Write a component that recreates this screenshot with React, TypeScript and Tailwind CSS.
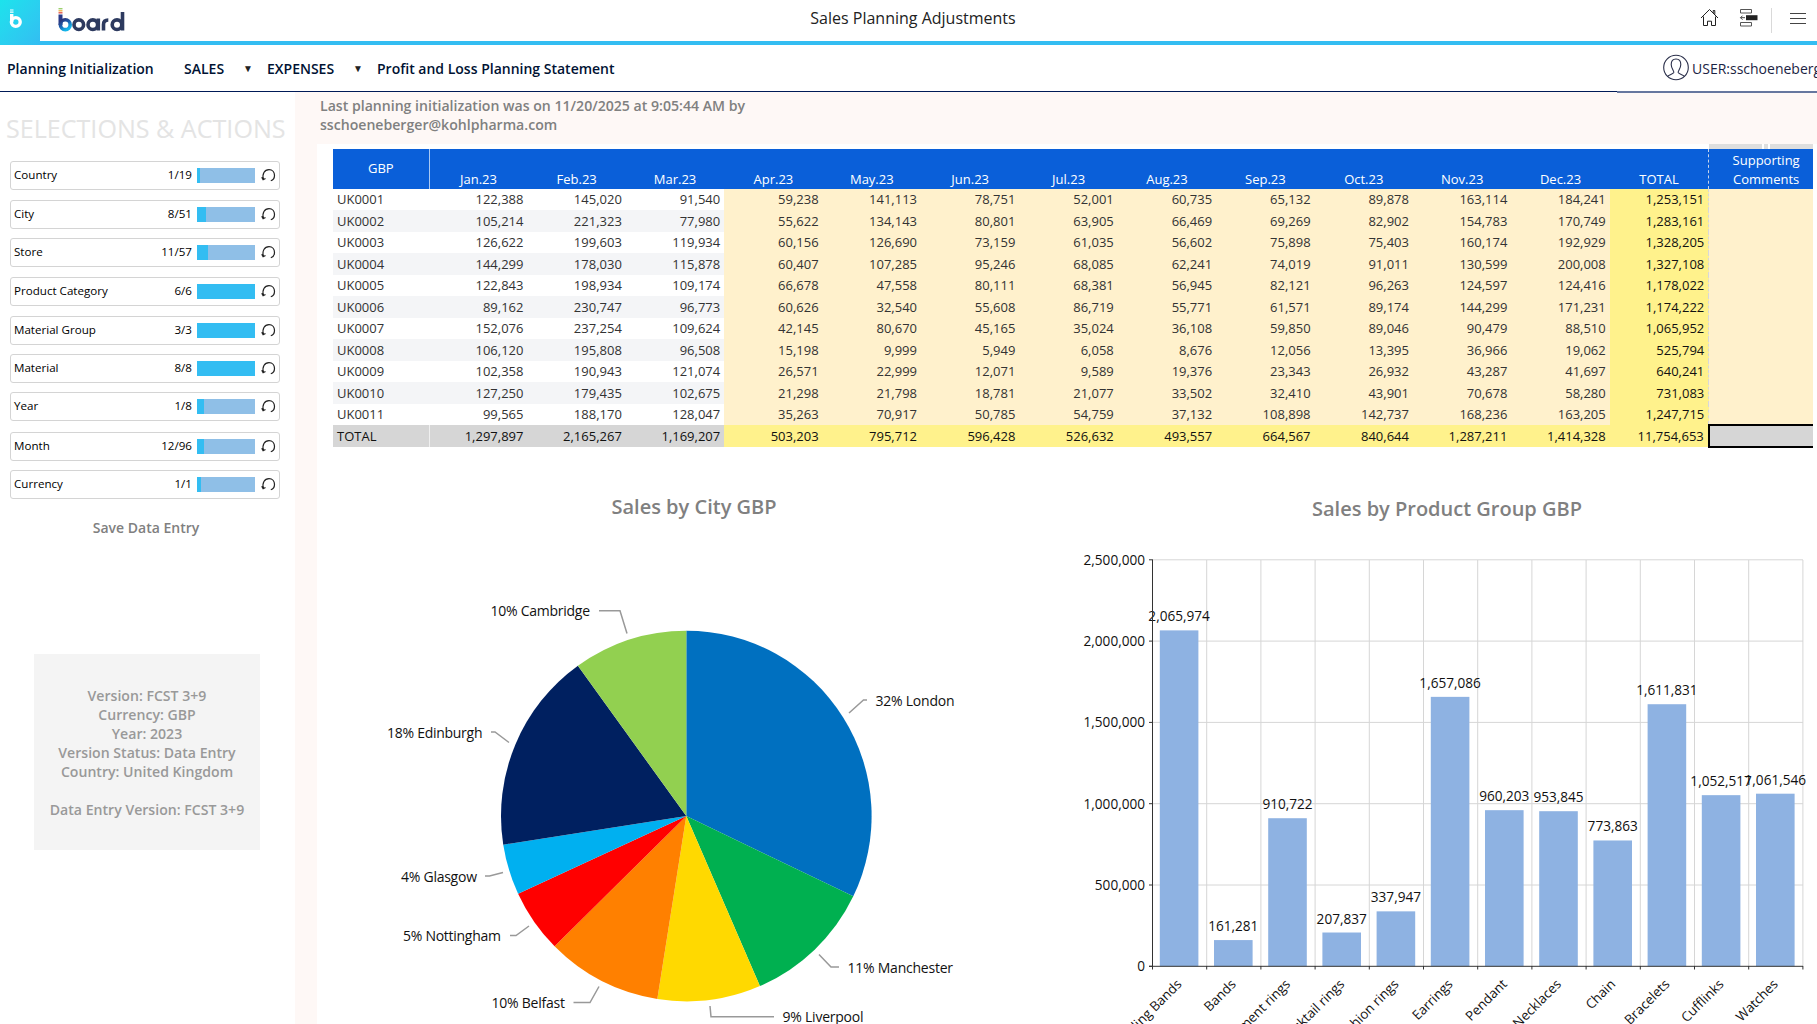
import React from "react";

const PERIODS = ["Jan.23", "Feb.23", "Mar.23", "Apr.23", "May.23", "Jun.23", "Jul.23", "Aug.23", "Sep.23", "Oct.23", "Nov.23", "Dec.23"];

const ROWS: [string, number[]][] = [
  ["UK0001", [122388, 145020, 91540, 59238, 141113, 78751, 52001, 60735, 65132, 89878, 163114, 184241, 1253151]],
  ["UK0002", [105214, 221323, 77980, 55622, 134143, 80801, 63905, 66469, 69269, 82902, 154783, 170749, 1283161]],
  ["UK0003", [126622, 199603, 119934, 60156, 126690, 73159, 61035, 56602, 75898, 75403, 160174, 192929, 1328205]],
  ["UK0004", [144299, 178030, 115878, 60407, 107285, 95246, 68085, 62241, 74019, 91011, 130599, 200008, 1327108]],
  ["UK0005", [122843, 198934, 109174, 66678, 47558, 80111, 68381, 56945, 82121, 96263, 124597, 124416, 1178022]],
  ["UK0006", [89162, 230747, 96773, 60626, 32540, 55608, 86719, 55771, 61571, 89174, 144299, 171231, 1174222]],
  ["UK0007", [152076, 237254, 109624, 42145, 80670, 45165, 35024, 36108, 59850, 89046, 90479, 88510, 1065952]],
  ["UK0008", [106120, 195808, 96508, 15198, 9999, 5949, 6058, 8676, 12056, 13395, 36966, 19062, 525794]],
  ["UK0009", [102358, 190943, 121074, 26571, 22999, 12071, 9589, 19376, 23343, 26932, 43287, 41697, 640241]],
  ["UK0010", [127250, 179435, 102675, 21298, 21798, 18781, 21077, 33502, 32410, 43901, 70678, 58280, 731083]],
  ["UK0011", [99565, 188170, 128047, 35263, 70917, 50785, 54759, 37132, 108898, 142737, 168236, 163205, 1247715]],
];

const TOTALS = [1297897, 2165267, 1169207, 503203, 795712, 596428, 526632, 493557, 664567, 840644, 1287211, 1414328, 11754653];

const SELECTORS = [
  { label: "Country", count: "1/19", fill: 5, gap: "mb-[10px]" },
  { label: "City", count: "8/51", fill: 15.5, gap: "mb-[9px]" },
  { label: "Store", count: "11/57", fill: 19, gap: "mb-[10px]" },
  { label: "Product Category", count: "6/6", fill: 100, gap: "mb-[10px]" },
  { label: "Material Group", count: "3/3", fill: 100, gap: "mb-[9px]" },
  { label: "Material", count: "8/8", fill: 100, gap: "mb-[9px]" },
  { label: "Year", count: "1/8", fill: 12, gap: "mb-[11px]" },
  { label: "Month", count: "12/96", fill: 12, gap: "mb-[9px]" },
  { label: "Currency", count: "1/1", fill: 7, gap: "" },
];

const SUMMARY = ["Version: FCST 3+9", "Currency: GBP", "Year: 2023", "Version Status: Data Entry", "Country: United Kingdom", "\u00a0", "Data Entry Version: FCST 3+9"];

// start/end are degrees clockwise from 12 o'clock
const SLICES = [
  { label: "32% London", color: "#0070c0", start: 0, end: 115.7, line: "849,713 863.5,700 867,700", x: 875.5, y: 706, w: 79 },
  { label: "11% Manchester", color: "#00b050", start: 115.7, end: 156.6, line: "819,954.5 831,967 839,967", x: 847.5, y: 973, w: 105.5 },
  { label: "9% Liverpool", color: "#ffd900", start: 156.6, end: 189, line: "710,1006 711,1016.7 774,1016.7", x: 782.5, y: 1022, w: 81 },
  { label: "10% Belfast", color: "#ff8000", start: 189, end: 225.3, line: "599,986.5 590,1002.5 573.5,1002.5", x: 491.5, y: 1008, w: 73.5 },
  { label: "5% Nottingham", color: "#ff0000", start: 225.3, end: 245.2, line: "529,926 516,935.5 510,935.5", x: 403, y: 941, w: 98 },
  { label: "4% Glasgow", color: "#00b0f0", start: 245.2, end: 261.1, line: "503,872.5 489.5,876 485,876", x: 401, y: 882, w: 76 },
  { label: "18% Edinburgh", color: "#002060", start: 261.1, end: 324.2, line: "509,742.5 495,732 491,732", x: 387, y: 738, w: 95.5 },
  { label: "10% Cambridge", color: "#92d050", start: 324.2, end: 360, line: "627,633.5 620,610.7 599,610.7", x: 490.5, y: 616, w: 99.5 },
];

const BARS: [string, number][] = [
  ["Wedding Bands", 2065974],
  ["Bands", 161281],
  ["Engagement rings", 910722],
  ["Cocktail rings", 207837],
  ["Fashion rings", 337947],
  ["Earrings", 1657086],
  ["Pendant", 960203],
  ["Necklaces", 953845],
  ["Chain", 773863],
  ["Bracelets", 1611831],
  ["Cufflinks", 1052517],
  ["Watches", 1061546],
];

const fmt = (n: number) => n.toLocaleString("en-US");

const BoardLogo: React.FC = () => (
  <svg width="70" height="26" viewBox="0 0 70 26" fill="none" className="ml-[17px] mt-[7px]">
    <defs>
      <linearGradient id="board-b" x1="0" y1="0" x2="0.6" y2="1">
        <stop offset="0" stopColor="#2b2f74" />
        <stop offset="0.5" stopColor="#1d5fae" />
        <stop offset="1" stopColor="#12b5ea" />
      </linearGradient>
    </defs>
    <path d="M1.5 1.7h4" stroke="#9ccf6c" strokeWidth="1.4" />
    <path d="M1.5 3.8h4" stroke="#f3b04b" strokeWidth="1.4" />
    <path d="M1.5 5.8h4" stroke="#e2574c" strokeWidth="1.4" />
    <path d="M3.5 7.5V18" stroke="#2a3a88" strokeWidth="4" />
    <circle cx="8.3" cy="17.7" r="4.9" stroke="url(#board-b)" strokeWidth="3.6" />
    <g stroke="#2d3a5f" strokeWidth="3.6">
      <circle cx="21.8" cy="17.7" r="4.8" />
      <circle cx="35.8" cy="17.7" r="4.8" />
      <path d="M41.3 11.5V23.5M46.5 23.5v-6c0-3.3 1.5-4.5 4.8-4.5" />
      <circle cx="60" cy="17.7" r="4.8" />
      <path d="M65.5 5v18.5" />
    </g>
  </svg>
);

const TopBar: React.FC = () => (
  <header className="flex h-[45px] border-b-4 border-[#33bdf2] bg-white">
    <div className="h-[45px] w-10 shrink-0 bg-gradient-to-br from-[#1ce3ec] to-[#33bdf2]">
      <svg width="40" height="41" viewBox="0 0 40 41" fill="none" stroke="#fff">
        <path d="M10 10h3.5M10 12.2h3.5" strokeWidth="1.2" />
        <path d="M11.7 14v8" strokeWidth="3.4" />
        <circle cx="15.8" cy="22" r="4.4" strokeWidth="3.4" />
      </svg>
    </div>
    <BoardLogo />
    <h1 className="ml-[466px] mt-[7px] w-[640px] text-center text-base leading-[22px] text-[#222]">Sales Planning Adjustments</h1>
    <div className="ml-auto flex h-[41px] shrink-0 items-start">
      <svg width="20" height="20" viewBox="0 0 20 20" fill="none" stroke="#222" className="mt-2">
        <path d="M1 10 9.5 1.5 18 10M3.500 8.500v9h4v-4.300h4v4.300h4v-9M13.200 5V2.500h1.600v4.200" />
      </svg>
      <svg width="20" height="20" viewBox="0 0 20 20" fill="none" className="ml-[19px] mt-2">
        <path d="M1.5 1.500h11v3.500h-11zM1.500 14.500h11V18h-11z" stroke="#555" />
        <path d="M7 7.200h11.500v5H7z" fill="#222" />
        <path d="M6 9.700H1.500M3.500 7.700l-2 2 2 2" stroke="#444" />
      </svg>
      <div className="ml-[12px] mt-2 h-[25px] w-px bg-[#d9d9d9]" />
      <svg width="16" height="14" viewBox="0 0 16 14" stroke="#444" className="ml-[18px] mr-[11px] mt-3">
        <path d="M0 1.500h16M0 6.500h16M0 11.500h16" />
      </svg>
    </div>
  </header>
);

const NavBar: React.FC = () => (
  <nav className="flex h-[47px] items-center overflow-hidden border-b border-[#001a57] bg-white pt-px text-[14px] font-semibold text-[#001233]">
    <span className="ml-[7px] w-[177px] shrink-0 whitespace-nowrap">Planning Initialization</span>
    <span className="w-[59px] shrink-0">SALES</span>
    <span className="w-6 shrink-0 text-[10px] text-[#222]">▼</span>
    <span className="w-[86px] shrink-0">EXPENSES</span>
    <span className="w-6 shrink-0 text-[10px] text-[#222]">▼</span>
    <span className="shrink-0 whitespace-nowrap">Profit and Loss Planning Statement</span>
    <div className="ml-auto flex w-[154px] shrink-0 items-center font-normal text-[#1b2444]">
      <svg width="26" height="27" viewBox="0 0 26 27" fill="none" stroke="#2a2f4a" strokeWidth="1.1" className="mb-[3px] shrink-0">
        <circle cx="13" cy="13.5" r="12.3" />
        <path d="M4.5 22.5c1-2 5.5-2.2 6.300-4 .4-1.500-2.600-4-2.600-8 0-3.500 2-5.500 4.800-5.500s4.800 2 4.800 5.500c0 4-3 6.500-2.600 8 .8 1.800 5.300 2 6.300 4" />
      </svg>
      <span className="ml-[3px] whitespace-nowrap">USER:sschoeneberger</span>
    </div>
  </nav>
);

const Sidebar: React.FC = () => (
  <aside className="w-[295px] shrink-0 bg-white">
    <h2 className="mt-[19px] ml-[6px] whitespace-nowrap text-[25.1px] leading-[34px] text-[#e4e4e4]">SELECTIONS &amp; ACTIONS</h2>
    <div className="mt-[16px] ml-[10px] flex w-[270px] flex-col">
      {SELECTORS.map((s) => (
        <div key={s.label} className={`flex h-[29px] items-center rounded-[3px] border border-[#d4d4d4] text-[11.6px] text-black ${s.gap}`}>
          <span className="ml-[3px] flex-1 pb-px">{s.label}</span>
          <span className="mr-[5px] pb-px">{s.count}</span>
          <div className="h-[15px] w-[58px] bg-[#8fbfe7]">
            <div className="h-full bg-[#33bdf2]" style={{ width: `${s.fill}%` }} />
          </div>
          <svg width="15" height="15" viewBox="0 0 15 15" fill="none" stroke="#222" strokeWidth="1.2" className="ml-[6px] mr-[3px]">
            <path d="M2.5 11.5C.8 6 3.500 1.700 8 1.700c3.500 0 5.500 2.800 5.500 5.800 0 2.500-1.500 4.500-3.700 5.300M.7 9.300l1.400 2.500 2.400-1.300" />
          </svg>
        </div>
      ))}
    </div>
    <button className="mt-[19px] ml-[46px] block w-[200px] text-center text-[14px] font-semibold leading-5 text-[#808080]">Save Data Entry</button>
    <div className="mt-[116px] ml-[34px] flex h-[196px] w-[226px] flex-col items-center bg-[#f4f4f4] pt-[32px] text-[14.1px] font-semibold leading-[19px] text-[#999]">
      {SUMMARY.map((line, i) => (
        <span key={i}>{line}</span>
      ))}
    </div>
  </aside>
);

const PlanningTable: React.FC = () => (
  <table className="ml-4 w-[1480px] table-fixed border-collapse text-[13px] text-[#333]">
    <colgroup>
      <col className="w-[96px]" />
      {PERIODS.map((p) => (
        <col key={p} className="w-[98.35px]" />
      ))}
      <col className="w-[99px]" />
      <col className="w-[104px]" />
    </colgroup>
    <thead>
      <tr className="h-[39.5px] bg-[#0a5fd9] leading-[19px] text-white">
        <th className="border-r border-[#a9c8f3] font-normal">GBP</th>
        {PERIODS.map((p) => (
          <th key={p} className="align-bottom font-normal">{p}</th>
        ))}
        <th className="align-bottom font-normal">TOTAL</th>
        <th className="border-l border-dashed border-[#c7d5ea] pl-[10px] align-bottom font-normal">Supporting Comments</th>
      </tr>
    </thead>
    <tbody>
      {ROWS.map(([store, values], r) => (
        <tr key={store} className={`h-[21.5px] leading-[18px] ${r % 2 ? "bg-[#f4f5f7]" : "bg-white"}`}>
          <td className="pl-1">{store}</td>
          {values.map((v, c) => (
            <td key={c} className={`pr-[4px] text-right ${c === 12 ? "bg-[#fff28c] text-[#111]" : c > 2 ? "bg-[#fff1cc]" : ""}`}>
              {fmt(v)}
            </td>
          ))}
          <td className="border-l border-dashed border-[#d8d8d8] bg-[#fff1cc]" />
        </tr>
      ))}
      <tr className="h-[22px] bg-[#d6d6d6] leading-[18px] text-[#111]">
        <td className="border-r border-[#f0f0f0] pl-1">TOTAL</td>
        {TOTALS.map((v, c) => (
          <td key={c} className={`pr-[4px] text-right ${c > 2 ? "bg-[#fff28c]" : ""}`}>{fmt(v)}</td>
        ))}
        <td className="border-y-2 border-l-2 border-black" />
      </tr>
    </tbody>
  </table>
);

const slicePath = (start: number, end: number) => {
  const point = (deg: number) => {
    const a = (deg * Math.PI) / 180;
    return `${686.3 + 185.3 * Math.sin(a)} ${816 - 185.3 * Math.cos(a)}`;
  };
  return `M686.3 816L${point(start)}A185.3 185.3 0 0 1 ${point(end)}Z`;
};

const CityPie: React.FC = () => (
  <svg width="700" height="464" viewBox="350 560 700 464" className="block" fontSize="14" fill="#111">
    {SLICES.map((s) => (
      <g key={s.label}>
        <path d={slicePath(s.start, s.end)} fill={s.color} />
        <polyline points={s.line} fill="none" stroke="#999" strokeWidth="1.5" />
        <text x={s.x} y={s.y} textLength={s.w}>{s.label}</text>
      </g>
    ))}
  </svg>
);

const LEFT = 1152.5;
const STEP = 54.2;
const BASE = 966.3;
const PX_PER_UNIT = 406.5 / 2500000;

const ProductBars: React.FC = () => (
  <svg width="757" height="484" viewBox="1060 540 757 484" className="block" fontSize="13.6" fill="#111">
    {[0, 1, 2, 3, 4, 5].map((i) => {
      const y = BASE - i * 81.3;
      return (
        <g key={i}>
          {i > 0 && <path d={`M${LEFT} ${y}H1803`} stroke="#d6d6d6" />}
          <path d={`M1149 ${y}H1153`} stroke="#333" />
          <text x="1145" y={y + 5} textAnchor="end">{fmt(i * 500000)}</text>
        </g>
      );
    })}
    {BARS.map(([name], i) => (
      <g key={name}>
        <path d={`M${LEFT + (i + 1) * STEP} 560V966`} stroke="#d6d6d6" />
        <path d={`M${LEFT + (i + 1) * STEP} 966v3.5`} stroke="#333" />
      </g>
    ))}
    {BARS.map(([name, value], i) => {
      const x = LEFT - 0.5 + (i + 0.5) * STEP;
      const top = BASE - value * PX_PER_UNIT;
      return (
        <g key={name}>
          <rect x={x - 19.3} y={top} width="38.6" height={BASE - top} fill="#8eb2e2" />
          <text x={x} y={top - 9} textAnchor="middle">{fmt(value)}</text>
          <text textAnchor="end" fontSize="13.3" transform={`translate(${x + 3.5} 985) rotate(-45)`}>{name}</text>
        </g>
      );
    })}
    <path d={`M${LEFT} 560V969.5M1149 ${BASE}H1803`} stroke="#333" />
  </svg>
);

const App: React.FC = () => (
  <div className="flex h-[1024px] w-[1817px] flex-col overflow-hidden bg-white font-['Open_Sans',sans-serif]">
    <TopBar />
    <NavBar />
    <div className="flex min-h-0 flex-1">
      <Sidebar />
      <main className="min-w-0 flex-1 bg-[#fef8f6]">
        <div className="flex h-[52px] justify-between pl-[25px]">
          <p className="w-[460px] pt-[4px] text-[14.1px] font-semibold leading-[19px] text-[#808080]">
            Last planning initialization was on 11/20/2025 at 9:05:44 AM by sschoeneberger@kohlpharma.com
          </p>
          <div className="-mt-px h-[2px] w-[200px] bg-[#66779f]" />
        </div>
        <div className="ml-[22px] h-[880px] bg-white">
          <div className="ml-[1392px] flex h-[5px] w-[104px] bg-[#dedede] pl-[53px]">
            <div className="h-full w-[8px] border-x-2 border-white" />
          </div>
          <PlanningTable />
          <div className="flex">
            <section className="flex w-[743px] flex-col">
              <h3 className="mt-[45px] mb-[39px] ml-[15px] w-[724px] text-center text-[20px] font-semibold leading-[28px] text-[#808080]">Sales by City GBP</h3>
              <div className="ml-[33px]">
                <CityPie />
              </div>
            </section>
            <section className="flex w-[757px] flex-col">
              <h3 className="mt-[47px] mb-[17px] ml-[17px] w-[740px] text-center text-[20px] font-semibold leading-[28px] text-[#808080]">Sales by Product Group GBP</h3>
              <ProductBars />
            </section>
          </div>
        </div>
      </main>
    </div>
  </div>
);

export default App;
